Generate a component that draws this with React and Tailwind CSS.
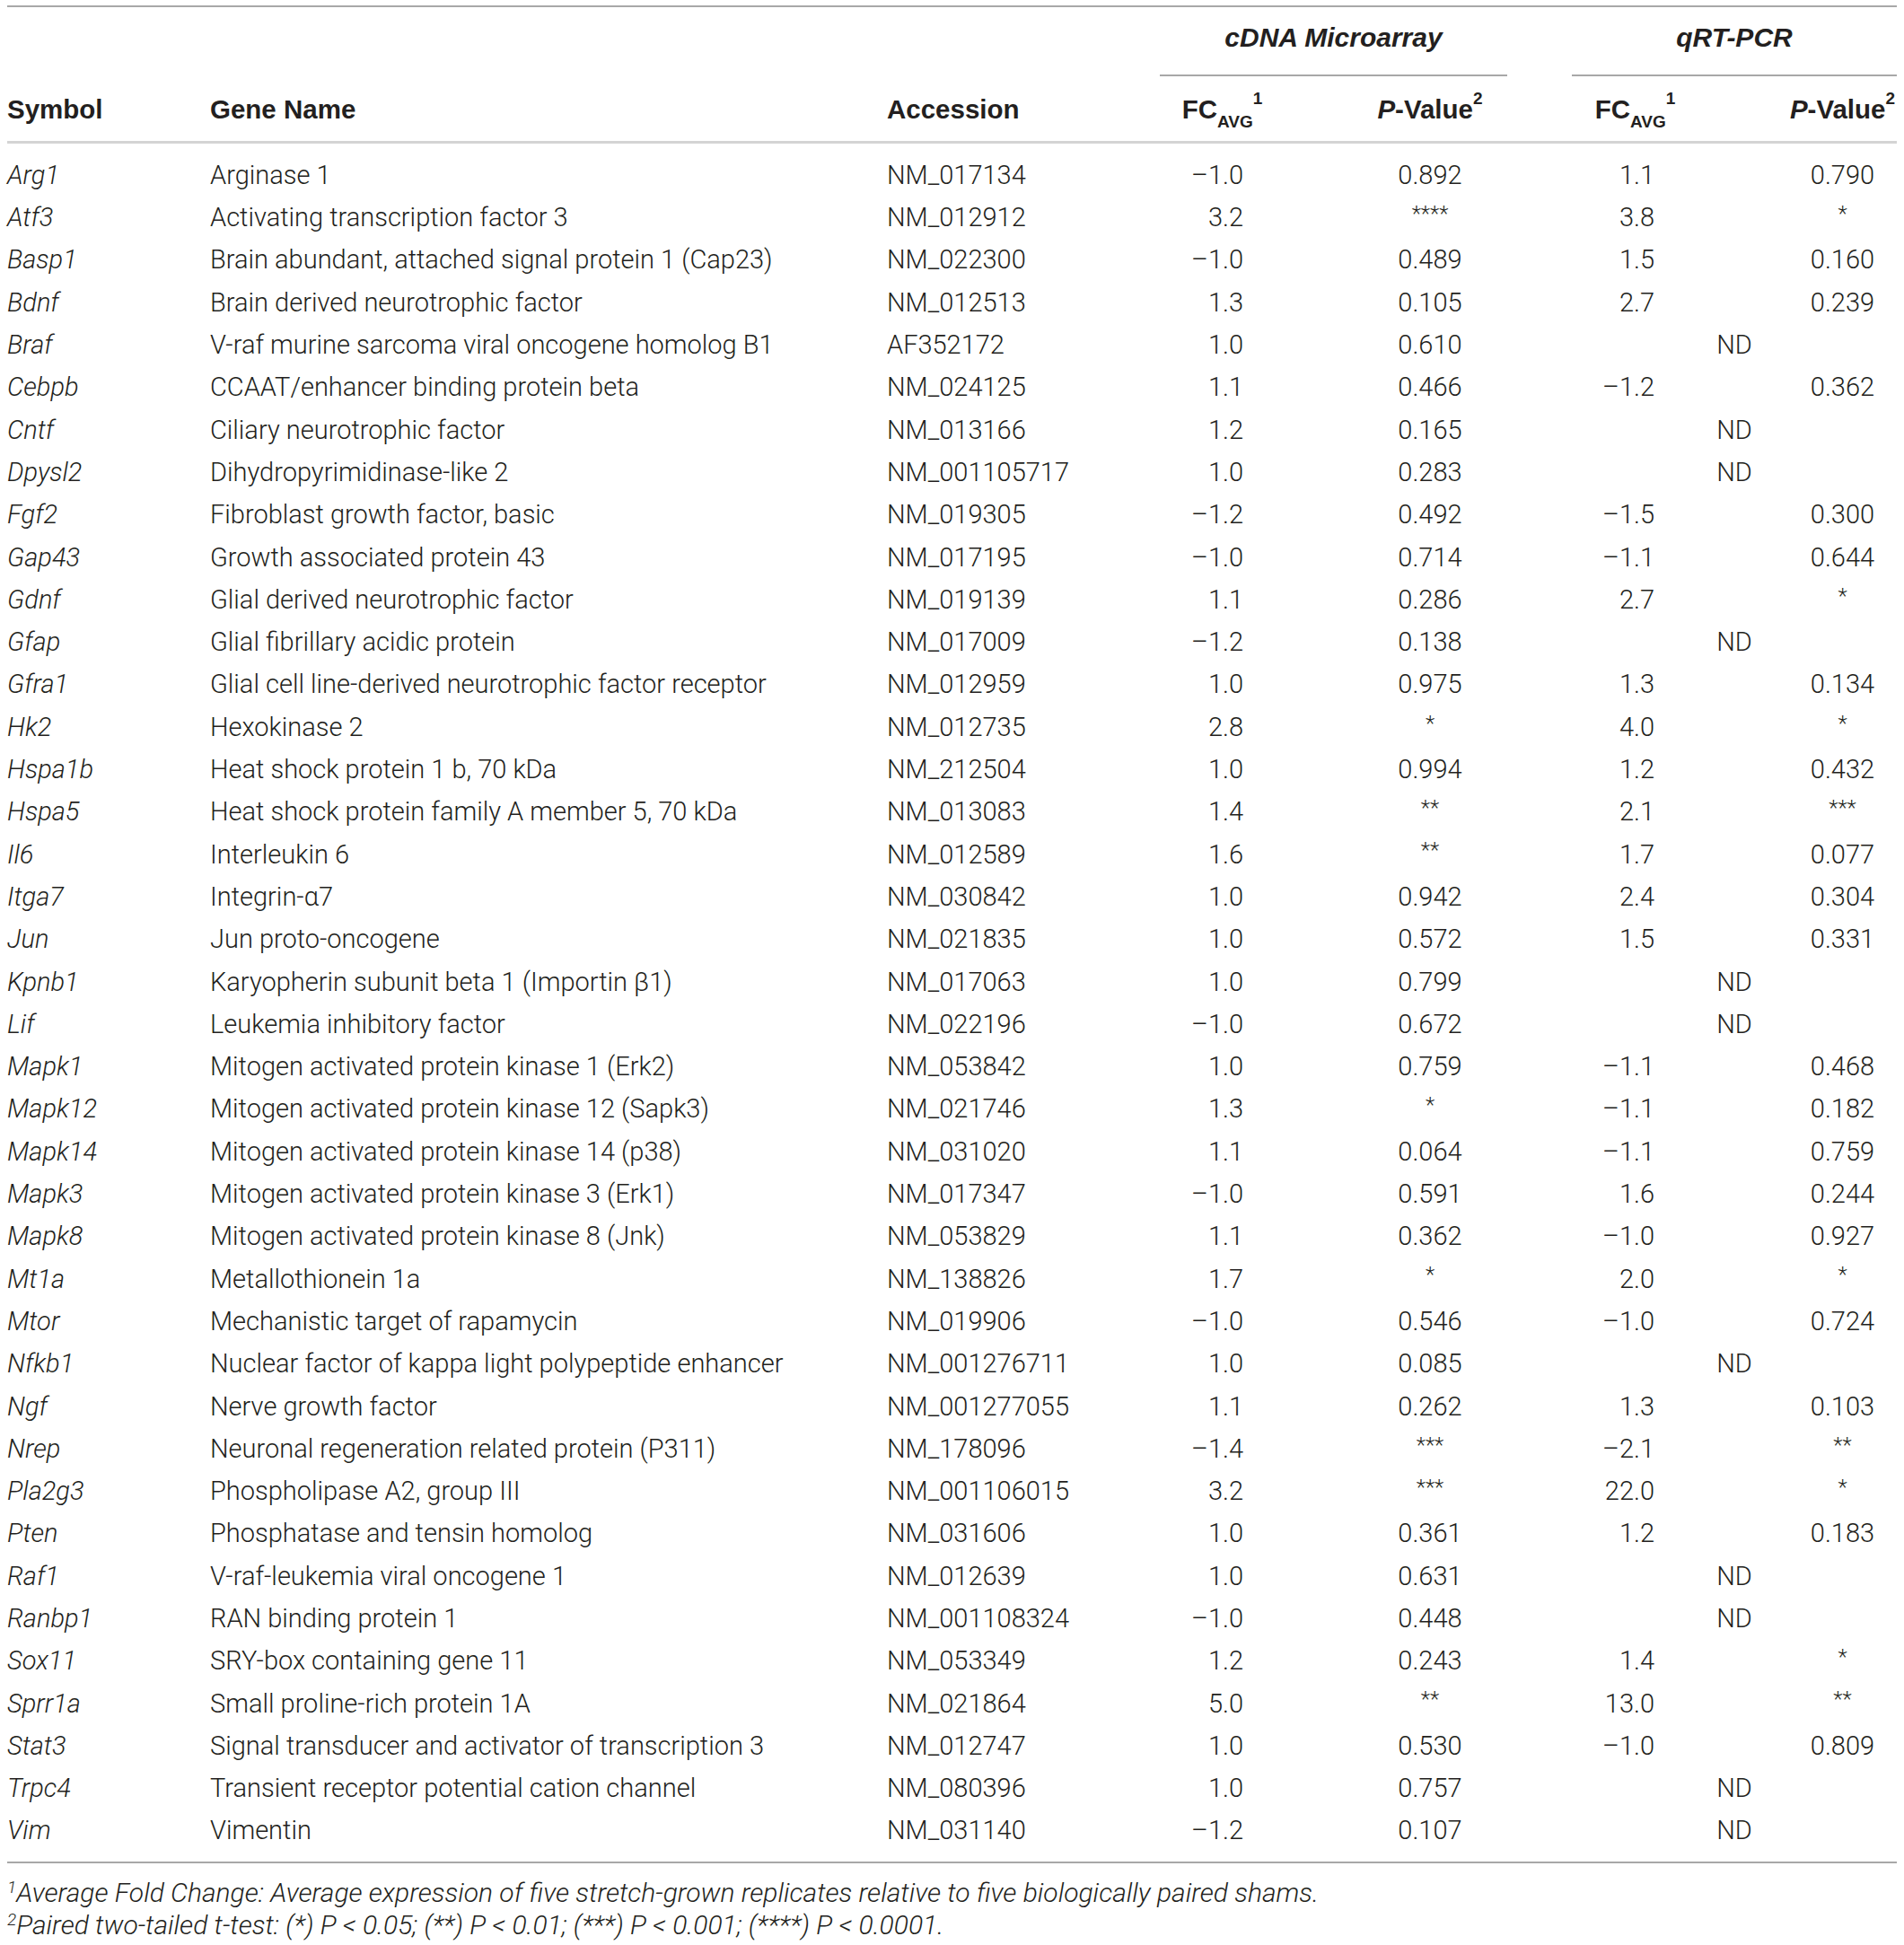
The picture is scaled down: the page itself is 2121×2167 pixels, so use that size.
const rows = [
  ['Arg1', 'Arginase 1', 'NM_017134', '–1.0', '0.892', '1.1', '0.790'],
  ['Atf3', 'Activating transcription factor 3', 'NM_012912', '3.2', '****', '3.8', '*'],
  ['Basp1', 'Brain abundant, attached signal protein 1 (Cap23)', 'NM_022300', '–1.0', '0.489', '1.5', '0.160'],
  ['Bdnf', 'Brain derived neurotrophic factor', 'NM_012513', '1.3', '0.105', '2.7', '0.239'],
  ['Braf', 'V-raf murine sarcoma viral oncogene homolog B1', 'AF352172', '1.0', '0.610', null, null],
  ['Cebpb', 'CCAAT/enhancer binding protein beta', 'NM_024125', '1.1', '0.466', '–1.2', '0.362'],
  ['Cntf', 'Ciliary neurotrophic factor', 'NM_013166', '1.2', '0.165', null, null],
  ['Dpysl2', 'Dihydropyrimidinase-like 2', 'NM_001105717', '1.0', '0.283', null, null],
  ['Fgf2', 'Fibroblast growth factor, basic', 'NM_019305', '–1.2', '0.492', '–1.5', '0.300'],
  ['Gap43', 'Growth associated protein 43', 'NM_017195', '–1.0', '0.714', '–1.1', '0.644'],
  ['Gdnf', 'Glial derived neurotrophic factor', 'NM_019139', '1.1', '0.286', '2.7', '*'],
  ['Gfap', 'Glial fibrillary acidic protein', 'NM_017009', '–1.2', '0.138', null, null],
  ['Gfra1', 'Glial cell line-derived neurotrophic factor receptor', 'NM_012959', '1.0', '0.975', '1.3', '0.134'],
  ['Hk2', 'Hexokinase 2', 'NM_012735', '2.8', '*', '4.0', '*'],
  ['Hspa1b', 'Heat shock protein 1 b, 70 kDa', 'NM_212504', '1.0', '0.994', '1.2', '0.432'],
  ['Hspa5', 'Heat shock protein family A member 5, 70 kDa', 'NM_013083', '1.4', '**', '2.1', '***'],
  ['Il6', 'Interleukin 6', 'NM_012589', '1.6', '**', '1.7', '0.077'],
  ['Itga7', 'Integrin-α7', 'NM_030842', '1.0', '0.942', '2.4', '0.304'],
  ['Jun', 'Jun proto-oncogene', 'NM_021835', '1.0', '0.572', '1.5', '0.331'],
  ['Kpnb1', 'Karyopherin subunit beta 1 (Importin β1)', 'NM_017063', '1.0', '0.799', null, null],
  ['Lif', 'Leukemia inhibitory factor', 'NM_022196', '–1.0', '0.672', null, null],
  ['Mapk1', 'Mitogen activated protein kinase 1 (Erk2)', 'NM_053842', '1.0', '0.759', '–1.1', '0.468'],
  ['Mapk12', 'Mitogen activated protein kinase 12 (Sapk3)', 'NM_021746', '1.3', '*', '–1.1', '0.182'],
  ['Mapk14', 'Mitogen activated protein kinase 14 (p38)', 'NM_031020', '1.1', '0.064', '–1.1', '0.759'],
  ['Mapk3', 'Mitogen activated protein kinase 3 (Erk1)', 'NM_017347', '–1.0', '0.591', '1.6', '0.244'],
  ['Mapk8', 'Mitogen activated protein kinase 8 (Jnk)', 'NM_053829', '1.1', '0.362', '–1.0', '0.927'],
  ['Mt1a', 'Metallothionein 1a', 'NM_138826', '1.7', '*', '2.0', '*'],
  ['Mtor', 'Mechanistic target of rapamycin', 'NM_019906', '–1.0', '0.546', '–1.0', '0.724'],
  ['Nfkb1', 'Nuclear factor of kappa light polypeptide enhancer', 'NM_001276711', '1.0', '0.085', null, null],
  ['Ngf', 'Nerve growth factor', 'NM_001277055', '1.1', '0.262', '1.3', '0.103'],
  ['Nrep', 'Neuronal regeneration related protein (P311)', 'NM_178096', '–1.4', '***', '–2.1', '**'],
  ['Pla2g3', 'Phospholipase A2, group III', 'NM_001106015', '3.2', '***', '22.0', '*'],
  ['Pten', 'Phosphatase and tensin homolog', 'NM_031606', '1.0', '0.361', '1.2', '0.183'],
  ['Raf1', 'V-raf-leukemia viral oncogene 1', 'NM_012639', '1.0', '0.631', null, null],
  ['Ranbp1', 'RAN binding protein 1', 'NM_001108324', '–1.0', '0.448', null, null],
  ['Sox11', 'SRY-box containing gene 11', 'NM_053349', '1.2', '0.243', '1.4', '*'],
  ['Sprr1a', 'Small proline-rich protein 1A', 'NM_021864', '5.0', '**', '13.0', '**'],
  ['Stat3', 'Signal transducer and activator of transcription 3', 'NM_012747', '1.0', '0.530', '–1.0', '0.809'],
  ['Trpc4', 'Transient receptor potential cation channel', 'NM_080396', '1.0', '0.757', null, null],
  ['Vim', 'Vimentin', 'NM_031140', '–1.2', '0.107', null, null],
];

const cols = 'grid grid-cols-[226px_754px_304px_193px_194px_72px_181px_181px]';

function FcHead() {
  return (
    <span>
      FC<sub className="text-[19px] align-[-5px]">AVG</sub>
      <sup className="text-[19px] align-[6px]">1</sup>
    </span>
  );
}

function PHead() {
  return (
    <span>
      <i>P</i>-Value<sup className="text-[19px] align-[6px]">2</sup>
    </span>
  );
}

function Pval({ v }) {
  const stars = v && v.startsWith('*');
  return <span className={stars ? 'text-[24px] relative top-[-5px]' : ''}>{v}</span>;
}

export default function App() {
  return (
    <div className="w-[2121px] bg-white text-[#231f20] font-['Roboto',sans-serif] font-light">
      <div className="ml-[8px] w-[2105px] pt-[6px]">
        <div className="border-t-2 border-[#a8a8a8]">
          {/* group header */}
          <div className={`${cols} h-[77px] font-['Liberation_Sans',Arial,sans-serif] font-bold italic text-[30px]`}>
            <div className="col-span-3" />
            <div className="col-span-2 flex items-center justify-center pb-[8px] border-b-2 border-[#a8a8a8]">cDNA Microarray</div>
            <div />
            <div className="col-span-2 flex items-center justify-center pb-[8px] border-b-2 border-[#a8a8a8]">qRT-PCR</div>
          </div>
          {/* column header */}
          <div className={`${cols} h-[75px] pt-[2px] font-['Liberation_Sans',Arial,sans-serif] font-bold text-[29.5px] border-b-[3px] border-[#d4d4d4]`}>
            <div className="flex items-center">Symbol</div>
            <div className="flex items-center">Gene Name</div>
            <div className="flex items-center">Accession</div>
            <div className="flex items-center justify-center pr-[54px]"><FcHead /></div>
            <div className="flex items-center justify-center pl-[22px]"><PHead /></div>
            <div />
            <div className="flex items-center justify-center pr-[40px]"><FcHead /></div>
            <div className="flex items-center justify-center pl-[60px]"><PHead /></div>
          </div>
          {/* body */}
          <div className="pt-[12px] pb-[10px] border-b-2 border-[#a8a8a8] text-[29px]">
            {rows.map(r => (
              <div key={r[0]} className={`${cols} h-[47.3px]`}>
                <div className="flex items-center italic">{r[0]}</div>
                <div className="flex items-center whitespace-nowrap">{r[1]}</div>
                <div className="flex items-center">{r[2]}</div>
                <div className="flex items-center justify-end pr-[100px]">{r[3]}</div>
                <div className="flex items-center justify-center pl-[22px]"><Pval v={r[4]} /></div>
                <div />
                {r[5] === null ? (
                  <div className="col-span-2 flex items-center justify-center">ND</div>
                ) : (
                  <>
                    <div className="flex items-center justify-end pr-[89px]">{r[5]}</div>
                    <div className="flex items-center justify-center pl-[60px]"><Pval v={r[6]} /></div>
                  </>
                )}
              </div>
            ))}
          </div>
        </div>
        {/* footnotes */}
        <div className="pt-[15px] italic text-[30px] leading-[36px]">
          <p><sup className="text-[19px]">1</sup>Average Fold Change: Average expression of five stretch-grown replicates relative to five biologically paired shams.</p>
          <p><sup className="text-[19px]">2</sup>Paired two-tailed t-test: (*) <i>P</i> &lt; 0.05; (**) <i>P</i> &lt; 0.01; (***) <i>P</i> &lt; 0.001; (****) <i>P</i> &lt; 0.0001.</p>
        </div>
      </div>
    </div>
  );
}
